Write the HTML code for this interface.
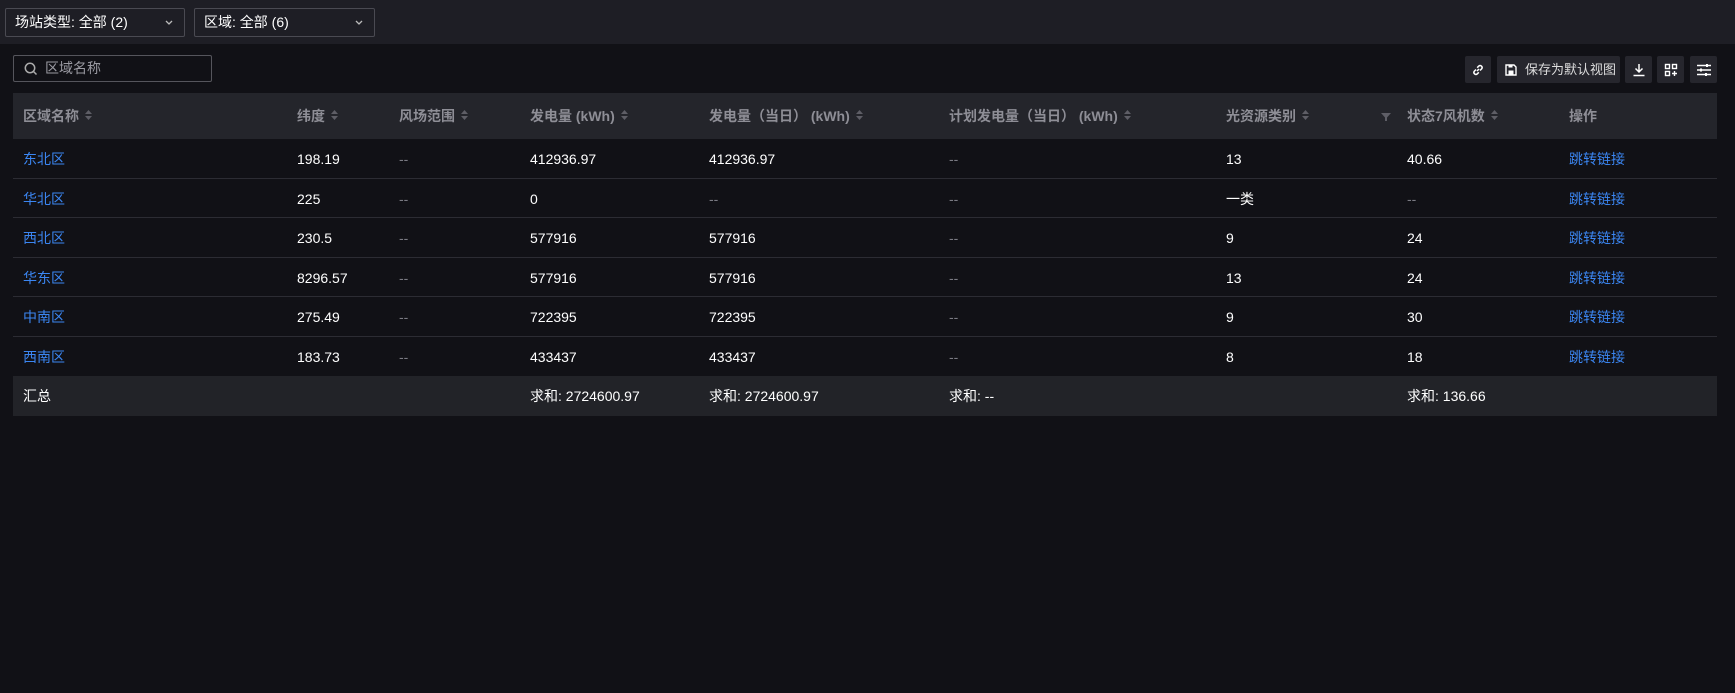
<!DOCTYPE html>
<html><head><meta charset="utf-8"><style>
*{box-sizing:border-box;margin:0;padding:0}
body{width:1735px;height:693px;background:#111116;font-family:"Liberation Sans","Noto Sans CJK SC",sans-serif;font-size:14px;color:#fff;position:relative;overflow:hidden}
.top{position:absolute;left:0;top:0;width:1735px;height:44px;background:#1e1e25}
.dd{position:absolute;top:8px;height:29px;border:1px solid #4a4a52;border-radius:2px;padding:0 9px;line-height:27px;font-size:14px;color:#fff}
.dd svg{position:absolute;right:10px;top:10px}
.search{position:absolute;left:13px;top:55px;width:199px;height:27px;border:1px solid #55555c;border-radius:2px;color:#9a9aa2;line-height:25px;padding-left:31px;font-size:14px}
.search svg{position:absolute;left:10px;top:6px}
.btn{position:absolute;top:56px;height:27px;background:#26262d;border-radius:2px;color:#ddd;font-size:13px;line-height:27px;white-space:nowrap}
.btn svg{position:absolute;left:50%;top:50%;transform:translate(-50%,-50%)}
.table{position:absolute;left:13px;top:93px;width:1704px}
.row{position:relative;height:39.5px;border-bottom:1px solid #2c2c33}
.row.h{height:46px;background:#24252b;border:none;color:#8e8e96;font-weight:bold}
.row.s{background:#222328;border:none;height:40px}
.c{position:absolute;top:1px;line-height:39px;white-space:nowrap}
.h .c{line-height:46px;top:0}
.g{color:#7a7a82}
.b{color:#3b86f2}
.sort{display:inline-block;vertical-align:middle;margin-left:6px;width:7px;height:12px;position:relative;top:-2px}
</style></head><body>
<div class="top"></div>
<div class="dd" style="left:5px;width:180px">场站类型: 全部 (2)<svg width="10" height="7" viewBox="0 0 10 7"><path d="M2 2l3 3 3-3" stroke="#bbb" stroke-width="1.3" fill="none"/></svg></div>
<div class="dd" style="left:194px;width:181px">区域: 全部 (6)<svg width="10" height="7" viewBox="0 0 10 7"><path d="M2 2l3 3 3-3" stroke="#bbb" stroke-width="1.3" fill="none"/></svg></div>
<div class="search"><svg width="14" height="14" viewBox="0 0 14 14"><circle cx="6" cy="6" r="4.7" stroke="#aaa" stroke-width="1.5" fill="none"/><path d="M9.5 9.5l3 3" stroke="#aaa" stroke-width="1.5"/></svg>区域名称</div>
<div class="btn" style="left:1465px;width:26px"><svg width="14" height="14" viewBox="0 0 14 14"><path d="M6 8l2-2M5 6.5L3.3 8.2a2 2 0 0 0 2.8 2.8L7.8 9.3M9 7.5l1.7-1.7a2 2 0 0 0-2.8-2.8L6.2 4.7" stroke="#fff" stroke-width="1.5" fill="none"/></svg></div>
<div class="btn" style="left:1497px;width:123px;padding-left:28px">保存为默认视图<svg style="left:14px" width="13" height="13" viewBox="0 0 13 13"><path d="M1.5 1.5h8l2 2v8h-10z" stroke="#fff" stroke-width="1.4" fill="none"/><rect x="4" y="7" width="5" height="4.5" fill="#fff"/><rect x="4" y="1.5" width="4" height="2.5" fill="#fff"/></svg></div>
<div class="btn" style="left:1625px;width:27px"><svg width="14" height="14" viewBox="0 0 14 14"><path d="M7 1v8M3.5 5.5L7 9l3.5-3.5M1.5 12.5h11" stroke="#fff" stroke-width="1.5" fill="none"/></svg></div>
<div class="btn" style="left:1657px;width:27px"><svg width="14" height="14" viewBox="0 0 14 14"><rect x="1.5" y="1.5" width="4" height="4" stroke="#fff" stroke-width="1.4" fill="none"/><rect x="8.5" y="1.5" width="4" height="4" stroke="#fff" stroke-width="1.4" fill="none"/><rect x="1.5" y="8.5" width="4" height="4" stroke="#fff" stroke-width="1.4" fill="none"/><path d="M10.5 8v5M8 10.5h5" stroke="#fff" stroke-width="1.4"/></svg></div>
<div class="btn" style="left:1690px;width:27px"><svg width="16" height="14" viewBox="0 0 16 14"><path d="M1 2.5h14M1 7h14M1 11.5h14" stroke="#fff" stroke-width="1.4"/><rect x="10" y="1" width="2" height="3" fill="#fff"/><rect x="4" y="5.5" width="2" height="3" fill="#fff"/><rect x="9" y="10" width="2" height="3" fill="#fff"/></svg></div>

<div class="table">
<div class="row h">
<div class="c" style="left:10px">区域名称<svg class="sort" viewBox="0 0 7 12"><path d="M0 5l3.5-4 3.5 4zM0 7l3.5 4 3.5-4z" fill="#5e5e66"/></svg></div>
<div class="c" style="left:284px">纬度<svg class="sort" viewBox="0 0 7 12"><path d="M0 5l3.5-4 3.5 4zM0 7l3.5 4 3.5-4z" fill="#5e5e66"/></svg></div>
<div class="c" style="left:386px">风场范围<svg class="sort" viewBox="0 0 7 12"><path d="M0 5l3.5-4 3.5 4zM0 7l3.5 4 3.5-4z" fill="#5e5e66"/></svg></div>
<div class="c" style="left:517px">发电量 (kWh)<svg class="sort" viewBox="0 0 7 12"><path d="M0 5l3.5-4 3.5 4zM0 7l3.5 4 3.5-4z" fill="#5e5e66"/></svg></div>
<div class="c" style="left:696px">发电量（当日） (kWh)<svg class="sort" viewBox="0 0 7 12"><path d="M0 5l3.5-4 3.5 4zM0 7l3.5 4 3.5-4z" fill="#5e5e66"/></svg></div>
<div class="c" style="left:936px">计划发电量（当日） (kWh)<svg class="sort" viewBox="0 0 7 12"><path d="M0 5l3.5-4 3.5 4zM0 7l3.5 4 3.5-4z" fill="#5e5e66"/></svg></div>
<div class="c" style="left:1213px">光资源类别<svg class="sort" viewBox="0 0 7 12"><path d="M0 5l3.5-4 3.5 4zM0 7l3.5 4 3.5-4z" fill="#5e5e66"/></svg></div>
<div class="c" style="left:1368px"><svg width="10" height="10" viewBox="0 0 10 10" style="vertical-align:middle"><path d="M0 1h10L6 5.5V9H4V5.5z" fill="#5e5e66"/></svg></div>
<div class="c" style="left:1394px">状态7风机数<svg class="sort" viewBox="0 0 7 12"><path d="M0 5l3.5-4 3.5 4zM0 7l3.5 4 3.5-4z" fill="#5e5e66"/></svg></div>
<div class="c" style="left:1556px">操作</div>
</div>
<div class="row"><div class="c b" style="left:10px">东北区</div><div class="c" style="left:284px">198.19</div><div class="c g" style="left:386px">--</div><div class="c" style="left:517px">412936.97</div><div class="c" style="left:696px">412936.97</div><div class="c g" style="left:936px">--</div><div class="c" style="left:1213px">13</div><div class="c" style="left:1394px">40.66</div><div class="c b" style="left:1556px">跳转链接</div></div>
<div class="row"><div class="c b" style="left:10px">华北区</div><div class="c" style="left:284px">225</div><div class="c g" style="left:386px">--</div><div class="c" style="left:517px">0</div><div class="c g" style="left:696px">--</div><div class="c g" style="left:936px">--</div><div class="c" style="left:1213px">一类</div><div class="c g" style="left:1394px">--</div><div class="c b" style="left:1556px">跳转链接</div></div>
<div class="row"><div class="c b" style="left:10px">西北区</div><div class="c" style="left:284px">230.5</div><div class="c g" style="left:386px">--</div><div class="c" style="left:517px">577916</div><div class="c" style="left:696px">577916</div><div class="c g" style="left:936px">--</div><div class="c" style="left:1213px">9</div><div class="c" style="left:1394px">24</div><div class="c b" style="left:1556px">跳转链接</div></div>
<div class="row"><div class="c b" style="left:10px">华东区</div><div class="c" style="left:284px">8296.57</div><div class="c g" style="left:386px">--</div><div class="c" style="left:517px">577916</div><div class="c" style="left:696px">577916</div><div class="c g" style="left:936px">--</div><div class="c" style="left:1213px">13</div><div class="c" style="left:1394px">24</div><div class="c b" style="left:1556px">跳转链接</div></div>
<div class="row"><div class="c b" style="left:10px">中南区</div><div class="c" style="left:284px">275.49</div><div class="c g" style="left:386px">--</div><div class="c" style="left:517px">722395</div><div class="c" style="left:696px">722395</div><div class="c g" style="left:936px">--</div><div class="c" style="left:1213px">9</div><div class="c" style="left:1394px">30</div><div class="c b" style="left:1556px">跳转链接</div></div>
<div class="row" style="border:none"><div class="c b" style="left:10px">西南区</div><div class="c" style="left:284px">183.73</div><div class="c g" style="left:386px">--</div><div class="c" style="left:517px">433437</div><div class="c" style="left:696px">433437</div><div class="c g" style="left:936px">--</div><div class="c" style="left:1213px">8</div><div class="c" style="left:1394px">18</div><div class="c b" style="left:1556px">跳转链接</div></div>
<div class="row s"><div class="c" style="left:10px">汇总</div><div class="c" style="left:517px">求和: 2724600.97</div><div class="c" style="left:696px">求和: 2724600.97</div><div class="c" style="left:936px">求和: --</div><div class="c" style="left:1394px">求和: 136.66</div></div>
</div>
</body></html>
